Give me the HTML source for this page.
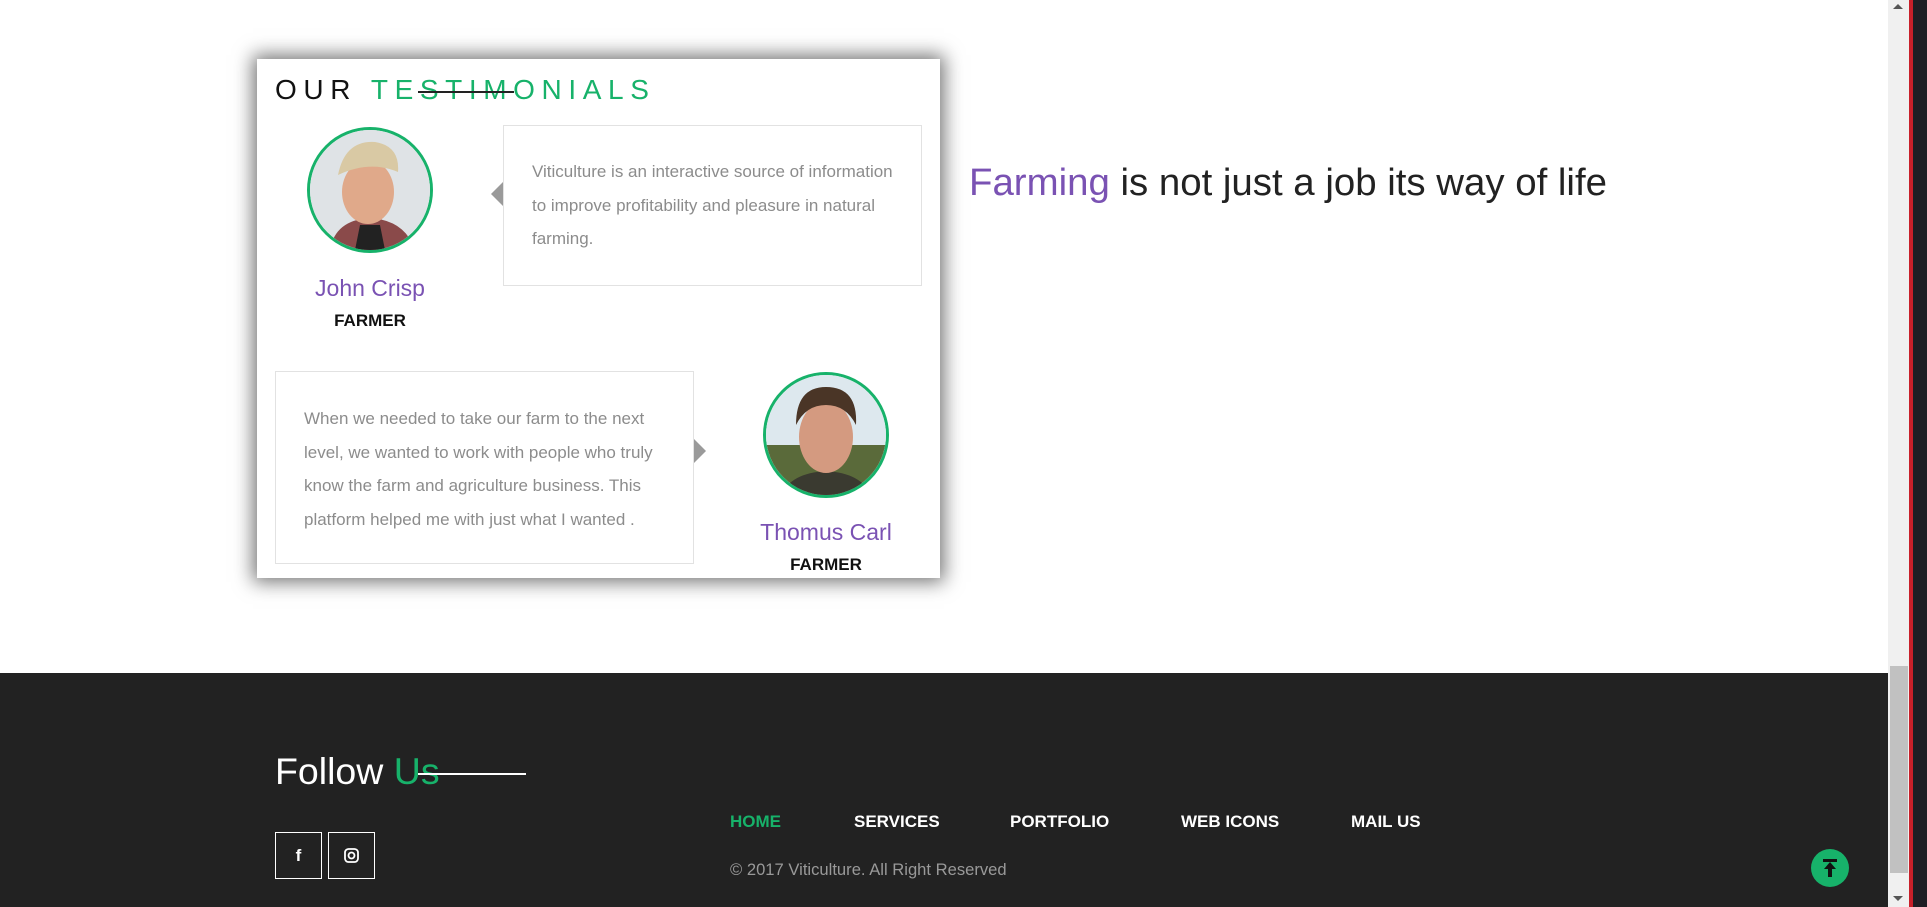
<!DOCTYPE html>
<html><head><meta charset="utf-8"><style>
*{margin:0;padding:0;box-sizing:border-box}
body{width:1927px;height:907px;overflow:hidden;background:#fff;font-family:"Liberation Sans",Arial,sans-serif;position:relative}
.a{position:absolute}
.card{left:257px;top:59px;width:683px;height:519px;background:#fff;box-shadow:0 0 18px 4px rgba(0,0,0,.55)}
.title{left:275px;top:74px;font-size:28px;letter-spacing:6.6px;color:#111;white-space:nowrap}
.title span{color:#17b26a}
.circ{width:126px;height:126px;border:3px solid #17b26a;border-radius:50%;overflow:hidden;background:#fff}
.box{border:1px solid #e2e2e2;background:#fff;color:#8c8c8c;font-size:17px;line-height:33.5px}
.name{color:#7a52b3;font-size:23px;text-align:center;width:200px}
.role{font-size:17px;font-weight:bold;color:#111;text-align:center;width:200px}
.nav{top:812px;font-size:17px;font-weight:bold;color:#fff}
</style></head><body>
<div class="a card"></div>
<div class="a title">OUR <span>TESTIMONIALS</span></div>
<div class="a" style="left:418px;top:91px;width:96px;height:2px;background:#222"></div>

<div class="a circ" style="left:307px;top:127px">
<svg width="120" height="120" viewBox="0 0 120 120"><rect width="120" height="120" fill="#dfe3e6"/><path d="M20 120 Q25 90 60 88 Q95 90 105 120Z" fill="#8a4a4a"/><path d="M45 120 L50 95 L70 95 L75 120Z" fill="#222"/><ellipse cx="58" cy="62" rx="26" ry="32" fill="#e0a98a"/><path d="M28 45 Q35 10 65 12 Q90 16 88 42 Q60 30 28 45Z" fill="#d9c9a4"/></svg></div>
<div class="a" style="left:491px;top:194px;width:0;height:0;border-top:12px solid transparent;border-bottom:12px solid transparent;border-right:12px solid #9a9a9a;margin-top:-12px"></div>
<div class="a box" style="left:503px;top:125px;width:419px;height:161px;padding:29px 28px 0 28px">Viticulture is an interactive source of information to improve profitability and pleasure in natural farming.</div>
<div class="a name" style="left:270px;top:275px">John Crisp</div>
<div class="a role" style="left:270px;top:311px">FARMER</div>

<div class="a box" style="left:275px;top:371px;width:419px;height:193px;padding:30px 28px 0 28px">When we needed to take our farm to the next level, we wanted to work with people who truly know the farm and agriculture business. This platform helped me with just what I wanted .</div>
<div class="a" style="left:694px;top:439px;width:0;height:0;border-top:12px solid transparent;border-bottom:12px solid transparent;border-left:12px solid #9a9a9a"></div>
<div class="a circ" style="left:763px;top:372px">
<svg width="120" height="120" viewBox="0 0 120 120"><rect width="120" height="120" fill="#dde8ee"/><rect y="70" width="120" height="50" fill="#5a6a3a"/><path d="M15 120 Q25 98 60 96 Q95 98 105 120Z" fill="#3a3a30"/><ellipse cx="60" cy="62" rx="27" ry="36" fill="#d49a80"/><path d="M30 50 Q30 12 60 12 Q92 12 90 50 Q80 30 60 30 Q40 30 30 50Z" fill="#4a3526"/></svg></div>
<div class="a name" style="left:726px;top:519px">Thomus Carl</div>
<div class="a role" style="left:726px;top:555px">FARMER</div>

<div class="a" style="left:969px;top:161px;font-size:38.4px;color:#222;white-space:nowrap"><span style="color:#7a52b3">Farming</span> is not just a job its way of life</div>

<div class="a" style="left:0;top:673px;width:1888px;height:234px;background:#222"></div>
<div class="a" style="left:275px;top:750px;font-size:37.5px;color:#fff;white-space:nowrap">Follow <span style="color:#17b26a">Us</span></div>
<div class="a" style="left:418px;top:773px;width:108px;height:2px;background:#fff"></div>
<div class="a" style="left:275px;top:832px;width:47px;height:47px;border:1px solid #fff;color:#fff;font-size:17px;font-weight:bold;text-align:center;line-height:45px">f</div>
<div class="a" style="left:328px;top:832px;width:47px;height:47px;border:1px solid #fff"><svg width="45" height="45" viewBox="0 0 45 45"><rect x="16" y="16" width="13" height="13" rx="3.5" fill="none" stroke="#fff" stroke-width="1.8"/><circle cx="22.5" cy="22.5" r="3" fill="none" stroke="#fff" stroke-width="1.8"/></svg></div>
<div class="a nav" style="left:730px;color:#17b26a">HOME</div>
<div class="a nav" style="left:854px">SERVICES</div>
<div class="a nav" style="left:1010px">PORTFOLIO</div>
<div class="a nav" style="left:1181px">WEB ICONS</div>
<div class="a nav" style="left:1351px">MAIL US</div>
<div class="a" style="left:730px;top:860px;font-size:16.6px;color:#999">© 2017 Viticulture. All Right Reserved</div>
<div class="a" style="left:1811px;top:849px;width:38px;height:38px;border-radius:50%;background:#17b26a"><svg width="38" height="38" viewBox="0 0 38 38"><rect x="12" y="10" width="14" height="3" fill="#111"/><path d="M19 13 L13 20 H17 V28 H21 V20 H25Z" fill="#111"/></svg></div>

<div class="a" style="left:1888px;top:0;width:21px;height:907px;background:#f0f0f0"></div>
<div class="a" style="left:1890px;top:666px;width:18px;height:207px;background:#c1c1c1"></div>
<div class="a" style="left:1893px;top:4px;width:0;height:0;border-left:5px solid transparent;border-right:5px solid transparent;border-bottom:5px solid #555"></div>
<div class="a" style="left:1893px;top:896px;width:0;height:0;border-left:5px solid transparent;border-right:5px solid transparent;border-top:5px solid #555"></div>
<div class="a" style="left:1909px;top:0;width:4px;height:907px;background:#c8202a"></div>
<div class="a" style="left:1913px;top:0;width:14px;height:907px;background:#1e1e24"></div>
</body></html>
